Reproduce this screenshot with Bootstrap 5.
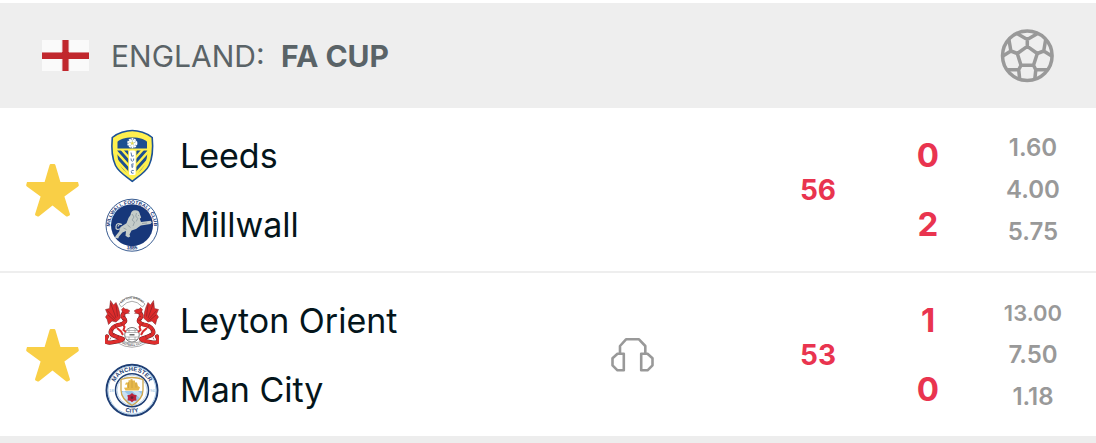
<!DOCTYPE html>
<html lang="en">
<head>
<meta charset="utf-8">
<meta name="viewport" content="width=device-width, initial-scale=1">
<title>England: FA Cup</title>
<link rel="stylesheet" href="https://cdn.jsdelivr.net/npm/bootstrap@5.3.0/dist/css/bootstrap.min.css">
<style>
  body { font-family: Inter, "Liberation Sans", sans-serif; color: #04151b; background: #fff; padding-top: 3px; }
  .league-bar { background: #eee; color: #5a6367; height: 105px; padding: 0 42px; }
  .league-link { color: inherit; font-size: 30px; line-height: 40px; margin-left: 22px; }
  .flag { width: 47px; height: 31px; }
  .icon-ball { width: 54px; height: 54px; }
  .match-row { padding: 13px 0 12px; }
  .match-row + .match-row { border-top: 2px solid #eee; }
  .star-cell { width: 105px; }
  .star-icon { width: 53px; height: 54px; }
  .team-line { height: 69px; gap: 21px; font-size: 34px; line-height: 40px; }
  .crest { width: 54px; height: 54px; flex: none; }
  .audio-cell { width: 60px; margin-right: 88px; }
  .audio-icon { width: 43px; height: 36px; }
  .minute-cell { width: 136px; font-size: 28px; }
  .score-cell { width: 84px; font-size: 33px; }
  .score-cell > span { height: 69px; line-height: 69px; }
  .odds-cell { width: 126px; font-size: 24px; color: #999; }
  .odds-cell > span { line-height: 42px; }
  .odds-cell > .odds-long { font-size: 22px; }
  .live-red { color: #e9344f; }
  .page-end { background: #ededed; }
</style>
<script src="https://cdn.jsdelivr.net/npm/bootstrap@5.3.0/dist/js/bootstrap.bundle.min.js"></script>
</head>
<body class="d-flex flex-column min-vh-100">

<header class="league-bar d-flex align-items-center">
  <svg class="flag" viewBox="0 0 47 31" aria-hidden="true">
    <rect width="47" height="31" fill="#fafafa"/>
    <path d="M0 12h47v7H0zM20 0h7v31h-7z" fill="#c1272d"/>
    <path d="M0 12.5h20M27 12.5h20M20.4 0v12M26.6 0v12M20.4 19v12M26.6 19v12" stroke="#d9868a" stroke-width="1"/>
  </svg>
  <a href="#" class="league-link text-decoration-none">ENGLAND: <span class="fw-bold ms-2">FA CUP</span></a>
  <svg class="icon-ball ms-auto" viewBox="0 0 54 54" fill="none" stroke="#999" stroke-width="3.5" stroke-linejoin="round" aria-hidden="true">
    <circle cx="27.3" cy="26.8" r="24.8"/>
    <path d="M27.3 17.3l10 7.2-3.8 11.7H21L17.3 24.500zM27.3 17.300V10.500L17 4.500M27.300 10.500L37.600 4.500M37.300 24.500l6.400-2.500 2-11.500M43.700 22l8 5M17.300 24.500l-6.400-2.500-2-11.500M10.900 22l-8 5M33.500 36.200l2.300 4.600h12.500M35.800 40.800l-1 9.500M21 36.200l-2.300 4.600H6.300M18.700 40.800l1 9.500"/>
  </svg>
</header>

<main>
  <section class="match-row d-flex align-items-center">
    <div class="star-cell text-center">
      <button type="button" class="btn p-0 border-0 lh-1" aria-label="Remove Leeds – Millwall from favourites">
        <svg class="star-icon" viewBox="0 0 53 54"><path d="M24.800 1h3.400q.9 0 1.200 1l5 16.900H52l.8 3.100q.2.900-.7 1.500L38.400 33.400l5.500 17.500q.3 1-.5 1.500l-2 1.100q-.7.300-1.400-.2L26.500 42.600 13 53.300q-.7.500-1.400.2l-2-1.100q-.8-.5-.5-1.500l5.500-17.500L.9 23.500q-.9-.6-.7-1.500l.8-3.100h17.600l5-16.900q.3-1 1.200-1z" fill="#f9cf46"/></svg>
      </button>
    </div>
    <div class="flex-grow-1">
      <div class="team-line d-flex align-items-center">
        <svg class="crest" viewBox="0 0 54 54" aria-hidden="true">
          <defs>
            <clipPath id="ld-rays"><path d="M12.200 21.500H23.200V44.500Q12 38 12.200 21.500zM42.400 21.500H31.400V44.500Q42.600 38 42.400 21.500z"/></clipPath>
          </defs>
          <path d="M27.300 1.500C33 1.500 42 4 47.200 8.500 48 17 48.500 27 44 36.500 40.500 43.500 34 47 27.300 52.300 20.600 47 14 43.500 10.500 36.500 6 27 6.500 17 7.300 8.500 12.500 4 21.500 1.500 27.300 1.500z" fill="#fff04f" stroke="#1d5297" stroke-width="1.600"/>
          <path d="M12.500 19.500V12.800C14 10.500 20 8.400 27.300 8.400S40.500 10.500 42 12.800v6.700z" fill="#1d4f91"/>
          <path d="M18 18l8 9M10 17l16 18M8 23l18 20M8 31l18 20M36.600 18l-8 9M44.600 17l-16 18M46.600 23l-18 20M46.600 31l-18 20" stroke="#1d4f91" stroke-width="3" clip-path="url(#ld-rays)"/>
          <rect x="24" y="21.500" width="6.600" height="24.500" rx="1.500" fill="#fff"/>
          <path d="M26 23.500l.8 3.800 2-.6M26 29.500q0 3 1.500 2.700t1.200-2.700M28.800 35h-2l.5 4M26.500 37h2M28.800 41.500q-2.600-.8-2.600 1.300t2.400 1.300" fill="none" stroke="#496fa5" stroke-width=".9"/>
          <circle cx="27.300" cy="14.200" r="3.700" fill="#fff"/>
          <circle cx="27.300" cy="14.200" r="4.300" fill="none" stroke="#fff" stroke-width="1.600" stroke-dasharray="2 .7"/>
          <path d="M27.300 11.200v2M30.200 13.400l-1.800.5M29.100 16.700L28 15.200M25.500 16.700l1.100-1.500M24.400 13.400l1.800.5" stroke="#7ba87b" stroke-width=".6"/>
          <circle cx="27.300" cy="14.200" r="1.200" fill="#e9d852"/>
        </svg>
        <span>Leeds</span>
      </div>
      <div class="team-line d-flex align-items-center">
        <svg class="crest" viewBox="0 0 54 54" aria-hidden="true">
          <defs>
            <path id="mw-top" d="M5.300 31.500A22 22 0 1 1 48.700 31.500"/>
            <path id="mw-low" d="M14 48.500Q27 54.500 40 48.500"/>
          </defs>
          <circle cx="27" cy="27.200" r="26" fill="#fff" stroke="#234a84" stroke-width=".9"/>
          <circle cx="27" cy="27.200" r="21" fill="#17377a"/>
          <text font-family="Liberation Sans, sans-serif" font-size="5" font-weight="700" fill="#17377a"><textPath href="#mw-top" startOffset="50%" text-anchor="middle">MILLWALL FOOTBALL CLUB</textPath></text>
          <text font-family="Liberation Sans, sans-serif" font-size="5" font-weight="700" fill="#17377a"><textPath href="#mw-low" startOffset="50%" text-anchor="middle">1885</textPath></text>
          <path d="M25.500 17Q26 12.300 30 12.200 34.500 12 35 16.500L36.200 19.500 34.800 20.800 36 24 45.800 22.800 46.800 24.600 45.500 26 35.800 27.500 31 31 26.500 32.500 24.500 36.500 25.200 38.500 23.200 39.500 20.500 37.800 21 33 17.500 34.500 14 38.500 13.200 40.500 9.800 39.800 10.800 37.800 14.200 33.500 15.500 29 21.500 25.200 23.500 20z" fill="#c5ccc9"/>
          <path d="M15.500 30.500Q10.500 33 11 28.500T17 26.500M12.800 28.500l2-2.500" fill="none" stroke="#c5ccc9" stroke-width="1.200"/>
          <path d="M27 16l2 3-2 3 2.500 2-1.500 4M31.500 15l-.8 3 2 2.500-1.500 3M22.500 27l3 2.500M18.500 30l3 1.500M37 25.500l5-.5M33 17.500h1" fill="none" stroke="#7c8b94" stroke-width=".6"/>
        </svg>
        <span>Millwall</span>
      </div>
    </div>
    <div class="minute-cell live-red fw-bold text-center">56</div>
    <div class="score-cell live-red fw-bold d-flex flex-column text-center"><span>0</span><span>2</span></div>
    <div class="odds-cell fw-semibold d-flex flex-column text-center"><span>1.60</span><span>4.00</span><span>5.75</span></div>
  </section>

  <section class="match-row d-flex align-items-center">
    <div class="star-cell text-center">
      <button type="button" class="btn p-0 border-0 lh-1" aria-label="Remove Leyton Orient – Man City from favourites">
        <svg class="star-icon" viewBox="0 0 53 54"><path d="M24.800 1h3.400q.9 0 1.200 1l5 16.900H52l.8 3.100q.2.900-.7 1.500L38.400 33.400l5.500 17.500q.3 1-.5 1.500l-2 1.100q-.7.300-1.400-.2L26.500 42.600 13 53.300q-.7.500-1.400.2l-2-1.100q-.8-.5-.5-1.500l5.500-17.500L.9 23.500q-.9-.6-.7-1.500l.8-3.100h17.600l5-16.900q.3-1 1.200-1z" fill="#f9cf46"/></svg>
      </button>
    </div>
    <div class="flex-grow-1">
      <div class="team-line d-flex align-items-center">
        <svg class="crest" viewBox="0 0 54 54" aria-hidden="true">
          <defs>
            <path id="lo-top" d="M12 13Q27 -3.500 42 13"/>
            <path id="lo-low" d="M12 46Q27 58 42 46"/>
            <g id="lo-wyvern">
              <path d="M5.500 6.500L8.500 11 11 8.500 13 13 14.500 18 15.500 24 11 28 7 27 3.500 30.500 2.200 25.500 .5 23 2.500 20 .5 15.500 4.500 14.500z" fill="#dd2b2b" stroke="#772326" stroke-width=".5"/>
              <path d="M20.500 17.500Q15.500 21 19 24.500T15.500 30.500Q9 31.500 6.500 35.500T8.500 41.500 17 44.500 9 48 2 42.500" fill="none" stroke="#6f2024" stroke-width="4.200" stroke-linecap="round"/>
              <path d="M20.500 17.500Q15.500 21 19 24.500T15.500 30.500Q9 31.500 6.500 35.500T8.500 41.500 17 44.500 9 48 2 42.500" fill="none" stroke="#df2d2c" stroke-width="3.300" stroke-linecap="round"/>
              <path d="M16.500 15.500l2-2 1.500 1.500 2.500.2 2.500 1.800-2 1.200 1.500 1-4 .5-3-1.500z" fill="#dd2b2b" stroke="#772326" stroke-width=".4"/>
              <path d="M17 29l2.500 4-1 3 2.500 2M12 34l4 3.500 2 3.500" fill="none" stroke="#d92b2b" stroke-width="2"/>
              <path d="M5.500 9l5.500 15M2.500 16.500l8 9M3 21l6.500 5.500M11 10.500l1.500 12M18 22.500l3-.5M17 25.500l3.500 1M15.500 29l2 2M10 31l1 2.500M6 35.500l2.500 1.500M8 41l1.500-2M13 43.500l.5-2M5 45.500l1-2" fill="none" stroke="#7c2026" stroke-width=".6"/>
            </g>
          </defs>
          <path d="M14 10Q27-5 40 10l-2.500 3Q27 1.500 16.500 13zM13.500 44.500Q27 54 40.500 44.500l1.500 4Q27 58 12 48.500z" fill="#fff" stroke="#888" stroke-width=".7"/>
          <text font-family="Liberation Sans, sans-serif" font-size="3" font-weight="700" fill="#555"><textPath href="#lo-top" startOffset="50%" text-anchor="middle">LEYTON ORIENT</textPath></text>
          <text font-family="Liberation Sans, sans-serif" font-size="3" font-weight="700" fill="#555"><textPath href="#lo-low" startOffset="50%" text-anchor="middle">FOOTBALL CLUB</textPath></text>
          <circle cx="27" cy="40.800" r="7.300" fill="#fff" stroke="#777" stroke-width="1"/>
          <path d="M20 38.500h14M20 43h14M24 34.500v4M30 34.500v4M24 43v4.500M30 43v4.500M22 36.500h10M22 45.500h10" stroke="#999" stroke-width=".7"/>
          <path d="M24.500 40.800h5" stroke="#555" stroke-width="1.300"/>
          <use href="#lo-wyvern"/>
          <use href="#lo-wyvern" transform="matrix(-1 0 0 1 54 0)"/>
        </svg>
        <span>Leyton Orient</span>
      </div>
      <div class="team-line d-flex align-items-center">
        <svg class="crest" viewBox="0 0 54 54" aria-hidden="true">
          <defs>
            <path id="mc-top" d="M8.400 31A19 19 0 1 1 45.600 31"/>
            <path id="mc-low" d="M10 43.500Q27 56 44 43.500"/>
            <clipPath id="mc-shield"><path d="M16 16.500Q27 12.500 38 16.500V27q0 9-11 15.500Q16 36 16 27z"/></clipPath>
          </defs>
          <circle cx="27" cy="27.200" r="25.500" fill="#fff" stroke="#1f3f75" stroke-width="2"/>
          <circle cx="27" cy="27.200" r="24" fill="none" stroke="#8fb9dd" stroke-width=".8"/>
          <circle cx="27" cy="27.200" r="16.500" fill="#fff" stroke="#1f3f75" stroke-width="1.500"/>
          <circle cx="27" cy="27.200" r="15" fill="none" stroke="#abc9e4" stroke-width=".8"/>
          <g clip-path="url(#mc-shield)">
            <path d="M15 12h24v16H15z" fill="#fff"/>
            <path d="M15 28h24v16H15z" fill="#98c5e9"/>
            <path d="M15 31l16 14 4-3-16-14zM27 28l10 9 2-4-6-5z" fill="#c9e1f4"/>
          </g>
          <path d="M16 16.500Q27 12.500 38 16.500V27q0 9-11 15.500Q16 36 16 27z" fill="none" stroke="#cda64c" stroke-width="1.300"/>
          <path d="M19 24.800l3-.3v-3l-2 .3 1-2.300h2.500v-2.300h2V16h2v1.500h2.500v2h2l1 3.500 2 1.500-1.500 3H20.500z" fill="#e7b94b"/>
          <path d="M23.500 19v6M27 17.500V25M31 19.500v5" stroke="#b58c3b" stroke-width=".5"/>
          <path d="M27 30l2 1.700 2.700.5-.6 2.600.4 2.700-2.700.2L27 39.200l-1.800-1.500-2.700-.2.400-2.700-.6-2.600 2.700-.5z" fill="#b9233d"/>
          <circle cx="27" cy="34.600" r="1.400" fill="#642339"/>
          <text font-family="Liberation Sans, sans-serif" font-size="6" font-weight="700" fill="#1f3f75"><textPath href="#mc-top" startOffset="50%" text-anchor="middle">MANCHESTER</textPath></text>
          <text font-family="Liberation Sans, sans-serif" font-size="6" font-weight="700" fill="#1f3f75"><textPath href="#mc-low" startOffset="50%" text-anchor="middle">CITY</textPath></text>
          <g font-family="Liberation Sans, sans-serif" font-size="4" fill="#85b3dc" text-anchor="middle"><text x="6.500" y="29">18</text><text x="47.500" y="29">94</text></g>
        </svg>
        <span>Man City</span>
      </div>
    </div>
    <div class="audio-cell text-center">
      <svg class="audio-icon" viewBox="0 0 43 36" fill="none" stroke="#999" stroke-width="2.600" role="img" aria-label="Audio commentary">
        <path d="M9 17V9L15 2.300H28L34.300 9V17M12.800 16.700v16.600H6.500L1.500 28.300v-7L6.500 16.700zM30.200 16.700v16.600h6.300l5-5v-7l-5-4.600z" stroke-linejoin="round"/>
      </svg>
    </div>
    <div class="minute-cell live-red fw-bold text-center">53</div>
    <div class="score-cell live-red fw-bold d-flex flex-column text-center"><span>1</span><span>0</span></div>
    <div class="odds-cell fw-semibold d-flex flex-column text-center"><span class="odds-long">13.00</span><span>7.50</span><span>1.18</span></div>
  </section>
</main>
<div class="page-end flex-grow-1"></div>

</body>
</html>
